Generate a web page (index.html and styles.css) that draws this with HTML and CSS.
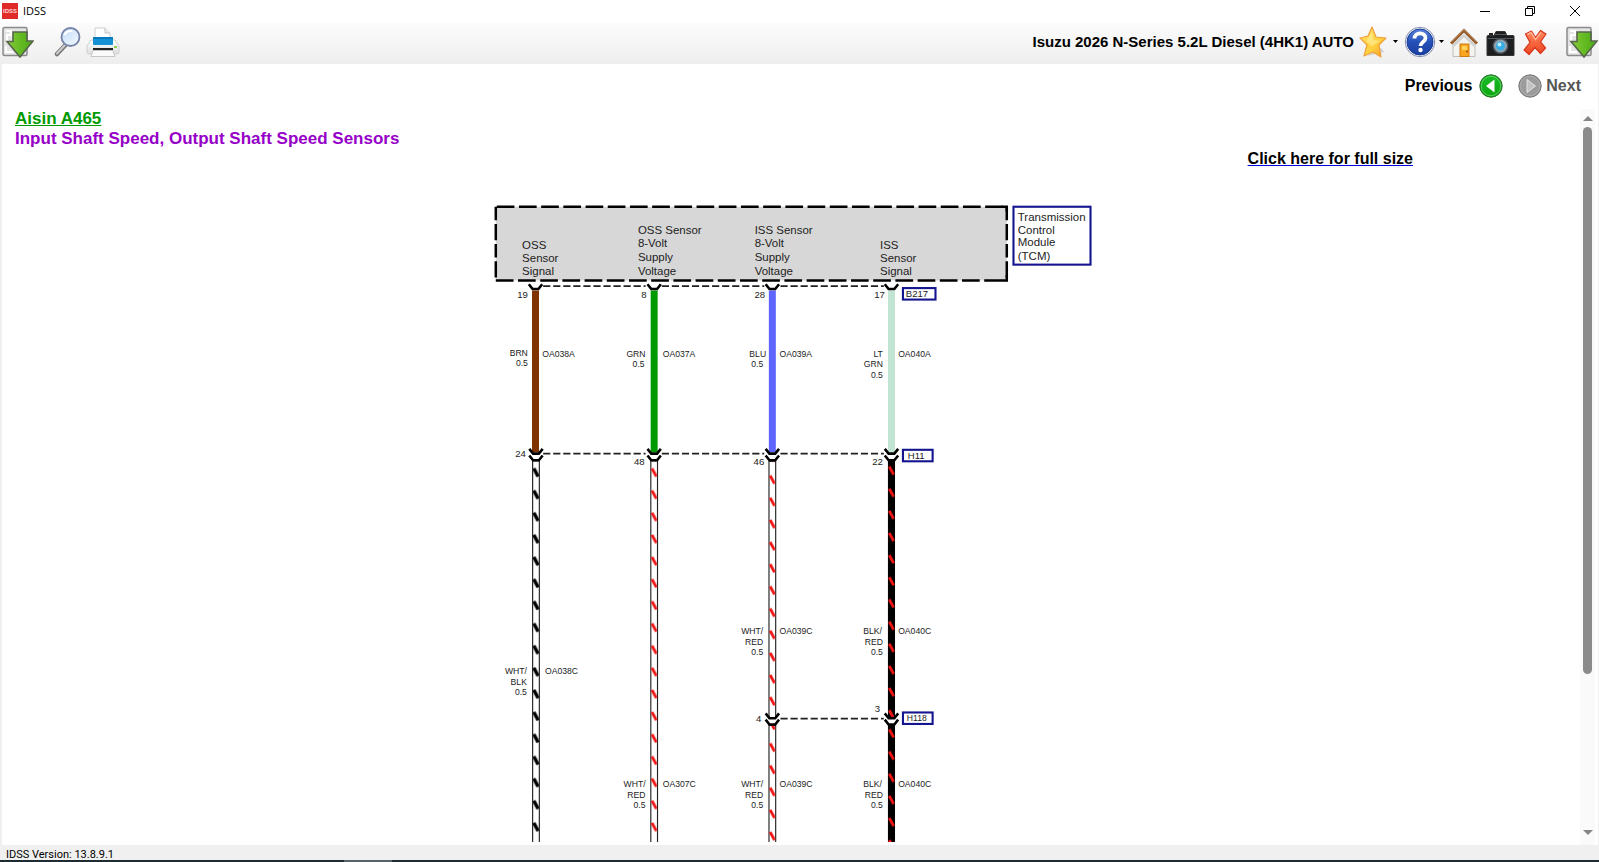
FILE: index.html
```html
<!DOCTYPE html>
<html lang="en">
<head>
<meta charset="utf-8">
<title>IDSS</title>
<link rel="stylesheet" href="styles.css">
</head>
<body>
<div class="window">
  <header class="titlebar">
    <svg class="app-logo" viewBox="0 0 16 16" aria-hidden="true">
      <rect width="16" height="16" fill="#e02a2a"/>
      <text x="8" y="10" text-anchor="middle" class="logo-text">IDSS</text>
    </svg>
    <span class="app-name">IDSS</span>
    <div class="window-controls">
      <button type="button" aria-label="Minimize"><svg viewBox="0 0 10 10"><path d="M0 5.5h10"/></svg></button>
      <button type="button" aria-label="Restore"><svg viewBox="0 0 10 10"><path d="M.5 2.5h7v7h-7zM2.5 2.500v-2h7v7h-2"/></svg></button>
      <button type="button" aria-label="Close"><svg viewBox="0 0 10 10"><path d="M0 0l10 10M10 0L0 10"/></svg></button>
    </div>
  </header>

  <div class="toolbar">
    <div class="tools-left">
      <button type="button" class="tool" aria-label="Collapse left panel">
        <svg width="32" height="32" viewBox="0 0 32 32"><rect x="1" y="1.500" width="24" height="28" rx="1.500" fill="#e4e4e4" stroke="#8a8a8a" stroke-width="1.500"/><path d="M4 5h5v4H5v7M4 20v6h7" fill="none" stroke="#fff" stroke-width="2"/><path d="M11 6h14v9h6L18 31 5 15.500h6z" fill="url(#leaf)" stroke="#56654c" stroke-width="1.600"/></svg>
      </button>
      <button type="button" class="tool search" aria-label="Search">
        <svg width="28" height="32" viewBox="0 0 28 32"><path d="M11.500 19L3 28" stroke="#777" stroke-width="4.500" stroke-linecap="round"/><path d="M11 19L3 27.500" stroke="#ccc" stroke-width="2" stroke-linecap="round"/><circle cx="16.500" cy="11" r="9" fill="url(#lens)" stroke="#7583a8" stroke-width="1.800"/><path d="M10.500 9c1-3 4-4.500 8-4" fill="none" stroke="#fff" stroke-width="2"/></svg>
      </button>
      <button type="button" class="tool" aria-label="Print">
        <svg width="34" height="32" viewBox="0 0 34 32"><path d="M9 2h10l5 5v8H9z" fill="#fff" stroke="#d0d0d0"/><path d="M19 2v5h5" fill="#eee" stroke="#c4c4c4"/><path d="M5 14h24l4 6v6q0 2-2 2H3q-2 0-2-2v-6z" fill="url(#paper)" stroke="#cfcfcf"/><rect x="7" y="11" width="20" height="8" rx="1" fill="#1691d5"/><path d="M7 12h20" stroke="#0873b4" stroke-width="1.500"/><path d="M7 22h20v2.500H7z" fill="#222"/><path d="M7 24.500h20l2 6H5z" fill="#fafafa" stroke="#c6c6c6"/><path d="M28 21h3" stroke="#8fd14c" stroke-width="2"/></svg>
      </button>
    </div>
    <div class="vehicle">Isuzu 2026 N-Series 5.2L Diesel (4HK1) AUTO</div>
    <div class="tools-right">
      <button type="button" class="tool" aria-label="Favorites">
        <svg width="28" height="32" viewBox="0 0 28 32"><path d="M8 30l17-4-3-4z" fill="#cfcfcf"/><path d="M13 1l4 10 10 1-7 7 2 12-8-5-9 4 3-11-7-7 8-2z" fill="url(#gold)" stroke="#eea13d" stroke-width="1.200" stroke-linejoin="round"/><path d="M13 6l1.500 8 7 1-9 5-5-5z" fill="#fff0a0" opacity=".6"/></svg>
      </button>
      <svg class="caret" viewBox="0 0 5 3"><path d="M0 0h5L2.500 3z"/></svg>
      <button type="button" class="tool" aria-label="Help">
        <svg width="32" height="32" viewBox="0 0 32 32"><circle cx="16" cy="16" r="14.700" fill="#fff" stroke="#7d8aa8"/><circle cx="16" cy="16" r="13" fill="url(#blue)" stroke="#163b99"/><path d="M10.500 12.500c0-7 11-6.500 11-.5 0 4-5 4-5 8" fill="none" stroke="#fff" stroke-width="3.800"/><circle cx="16.500" cy="24" r="2.200" fill="#fff"/></svg>
      </button>
      <svg class="caret narrow" viewBox="0 0 5 3"><path d="M0 0h5L2.500 3z"/></svg>
      <button type="button" class="tool" aria-label="Home">
        <svg width="30" height="32" viewBox="0 0 30 32"><path d="M4 16L15 6l11 10v14.500H4z" fill="#f3f3f0" stroke="#bdbdbd"/><path d="M5 17L15 8l10 9v4L15 11 5 21z" fill="#d0d0cd"/><path d="M2 17.500L15 4.500l13 13" fill="none" stroke="#93572d" stroke-width="3"/><path d="M2 16.500L15 3.500l13 13" fill="none" stroke="#c99862" stroke-width="1"/><rect x="11" y="18" width="9" height="12.500" fill="#f9a51d" stroke="#cf7b10"/><rect x="13" y="20" width="5" height="4" fill="#ffd45e"/><circle cx="18" cy="25.500" r="1" fill="#8b4a10"/></svg>
      </button>
      <button type="button" class="tool camera" aria-label="Screenshot">
        <svg width="29" height="32" viewBox="0 0 29 32"><path d="M3 7h4v2H3z" fill="#222"/><path d="M10 5.500h9l2 4h6q1 0 1 1v19H1V10.500q0-1 1-1h6z" fill="#1d1e20" stroke="#333"/><path d="M9 8.500h12M2 12.500h25" stroke="#55595f"/><circle cx="14.500" cy="20" r="8" fill="#4b5056"/><circle cx="14.500" cy="20" r="6.500" fill="#92a4ae"/><circle cx="14.500" cy="20" r="4.500" fill="#36aee5"/><circle cx="13.500" cy="18.500" r="2" fill="#b7edff"/></svg>
      </button>
      <button type="button" class="tool" aria-label="Close page">
        <svg width="24" height="32" viewBox="0 0 24 32"><path d="M2.500 8L8.500 5l4 6.500 5-7 5.500 3.500-5.500 8 5 6-5 5.500-5.500-6-6 7-5-4.500 6-7.500z" fill="url(#red)" stroke="#d73518" stroke-width="1.200" stroke-linejoin="round"/><path d="M4.500 8.500l3.500-2 4.500 7 5.500-7" fill="none" stroke="#ffb193" stroke-width="1.500"/></svg>
      </button>
      <button type="button" class="tool last" aria-label="Collapse right panel">
        <svg width="32" height="32" viewBox="0 0 32 32"><rect x="1" y="1.500" width="24" height="28" rx="1.500" fill="#e4e4e4" stroke="#8a8a8a" stroke-width="1.500"/><path d="M4 5h5v4H5v7M4 20v6h7" fill="none" stroke="#fff" stroke-width="2"/><path d="M11 6h14v9h6L18 31 5 15.500h6z" fill="url(#leaf)" stroke="#56654c" stroke-width="1.600"/></svg>
      </button>
    </div>
    <svg class="defs" width="0" height="0" aria-hidden="true">
      <defs>
        <linearGradient id="leaf"><stop offset="0" stop-color="#8acb3c"/><stop offset=".5" stop-color="#64bb22"/><stop offset="1" stop-color="#4fa818"/></linearGradient>
        <linearGradient id="lens" x2="1" y2="1"><stop offset="0" stop-color="#c3dcf8"/><stop offset="1" stop-color="#f2f9ff"/></linearGradient>
        <linearGradient id="paper" x2="0" y2="1"><stop offset="0" stop-color="#fff"/><stop offset="1" stop-color="#dedede"/></linearGradient>
        <linearGradient id="gold" x2="1" y2="1"><stop offset="0" stop-color="#ffe36c"/><stop offset=".6" stop-color="#ffcf3e"/><stop offset="1" stop-color="#f59524"/></linearGradient>
        <linearGradient id="blue" x2="0" y2="1"><stop offset="0" stop-color="#5b83dd"/><stop offset=".5" stop-color="#2450b8"/><stop offset="1" stop-color="#1c3f9f"/></linearGradient>
        <linearGradient id="red" x2="0" y2="1"><stop offset="0" stop-color="#ff8a5c"/><stop offset="1" stop-color="#ee4424"/></linearGradient>
        <linearGradient id="go" x2="0" y2="1"><stop offset="0" stop-color="#1cbb2a"/><stop offset="1" stop-color="#0aa60f"/></linearGradient>
      </defs>
    </svg>
  </div>

  <main class="page">
    <nav class="pager" aria-label="Pages">
      <button type="button" class="pager-button">Previous
        <svg width="24" height="24" viewBox="0 0 24 24"><circle cx="12" cy="12" r="11.200" fill="url(#go)" stroke="#2f6d2f"/><circle cx="12" cy="12" r="9.700" fill="none" stroke="#6bd86b" stroke-width=".8"/><path d="M15.500 5.500v13L7 12z" fill="#fff"/></svg>
      </button>
      <button type="button" class="pager-button next">
        <svg width="24" height="24" viewBox="0 0 24 24"><circle cx="12" cy="12" r="11.200" fill="#9b9b9b" stroke="#777"/><circle cx="12" cy="12" r="9.700" fill="none" stroke="#adadad"/><path d="M9 5.500v13l8.500-6.500z" fill="#c2c2c2" stroke="#e2e2e2"/></svg>
        Next</button>
    </nav>
    <div class="viewport">
      <article class="document">
        <h1 class="heading"><a href="#a465">Aisin A465</a></h1>
        <h2 class="heading subject">Input Shaft Speed, Output Shaft Speed Sensors</h2>
        <p class="full-size"><a href="#full">Click here for full size</a></p>
        <svg class="diagram" viewBox="0 0 650 681" role="img" aria-label="Speed sensor wiring diagram">
          <defs>
            <path id="cup" d="M-7-5l4 5h6l4-5"/>
            <pattern id="stripe-black" width="7" height="23.150" x="-3.500" patternUnits="userSpaceOnUse"><path d="M1.200 7L5.800 15.500" stroke="#000" stroke-width="3.600"/></pattern>
            <pattern id="stripe-red" width="7" height="23.150" x="-3.500" patternUnits="userSpaceOnUse"><path d="M1.200 7L5.800 15.500" stroke="#f01414" stroke-width="3"/></pattern>
          </defs>

          <rect x="16.500" y="17.500" width="534" height="77" fill="#d7d7d7"/>
          <g class="module-edge">
            <path d="M16.500 17.500H550.500" stroke-dashoffset="-1"/>
            <path d="M16.500 94.500H550.500"/>
            <path d="M16.500 17.500V94.500M550.500 17.500V94.500" stroke-dasharray="14 4 17 4"/>
            <path d="M545 17.500h5.500v5M550.500 89v5.500H545" stroke-dasharray="none"/>
          </g>
          <g class="label-box">
            <rect x="557.500" y="17.500" width="80.500" height="60.500"/>
            <rect x="442" y="102.500" width="34" height="12"/>
            <rect x="442" y="271.500" width="31" height="12"/>
            <rect x="442" y="546" width="31" height="12"/>
          </g>

          <g class="link-line">
            <path d="M66 100.500H173M190 100.500H297M314 100.500H422"/>
            <path d="M66 275.500H173M190 275.500H297M314 275.500H422"/>
            <path d="M314 552.500H422"/>
          </g>

          <g stroke-width="7.300">
            <path d="M58 105V274" stroke="#803300"/>
            <path d="M182 105V274" stroke="#009900"/>
            <path d="M305.500 105V274" stroke="#5f66ff"/>
            <path d="M430 105V274" stroke="#c2e5d3"/>
          </g>

          <g transform="translate(58.500 284)"><rect class="wire-white" x="-3.500" y="-1" width="7" height="400"/><rect x="-3.500" y="-1" width="7" height="398" fill="url(#stripe-black)"/></g>
          <g transform="translate(182 284)"><rect class="wire-white" x="-3.500" y="-1" width="7" height="400"/><rect x="-3.500" y="-1" width="7" height="398" fill="url(#stripe-red)"/></g>
          <g transform="translate(305.500 291.500)"><rect class="wire-white" x="-3.500" y="-8" width="7" height="268"/><rect x="-3.500" y="-8" width="7" height="268" fill="url(#stripe-red)"/></g>
          <g transform="translate(305.500 594.500)"><rect class="wire-white" x="-3.500" y="-35" width="7" height="124"/><rect x="-3.500" y="-35" width="7" height="124" fill="url(#stripe-red)"/></g>
          <g transform="translate(430 282)"><rect x="-3.700" y="1" width="7.400" height="268"/><rect x="-3.500" y="1" width="7" height="268" fill="url(#stripe-red)"/></g>
          <g transform="translate(430 603)"><rect x="-3.700" y="-44" width="7.400" height="124"/><rect x="-3.500" y="-44" width="7" height="124" fill="url(#stripe-red)"/></g>

          <g class="cups">
            <use href="#cup" x="58" y="103.500"/><use href="#cup" x="182" y="103.500"/><use href="#cup" x="305.500" y="103.500"/><use href="#cup" x="430" y="103.500"/>
            <path class="gap" d="M51 278.500h15M175 278.500h15M299 278.500h15M423 278.500h15M299 555.500h15M423 555.500h15"/>
            <use href="#cup" x="58.500" y="275.500"/><use href="#cup" x="182" y="275.500"/><use href="#cup" x="305.500" y="275.500"/><use href="#cup" x="430" y="275.500"/>
            <use href="#cup" x="58.500" y="282.500"/><use href="#cup" x="182" y="282.500"/><use href="#cup" x="305.500" y="282.500"/><use href="#cup" x="430" y="282.500"/>
            <use href="#cup" x="305.500" y="552"/><use href="#cup" x="430" y="552"/><use href="#cup" x="305.500" y="558.500"/><use href="#cup" x="430" y="558.500"/>
          </g>

          <g class="name">
            <text x="44" y="62">OSS</text><text x="44" y="75">Sensor</text><text x="44" y="89">Signal</text>
            <text x="165" y="46">OSS Sensor</text><text x="165" y="60">8-Volt</text><text x="165" y="74">Supply</text><text x="165" y="89">Voltage</text>
            <text x="287" y="46">ISS Sensor</text><text x="287" y="60">8-Volt</text><text x="287" y="74">Supply</text><text x="287" y="89">Voltage</text>
            <text x="418" y="62">ISS</text><text x="418" y="75">Sensor</text><text x="418" y="89">Signal</text>
            <text x="562" y="32">Transmission</text><text x="562" y="46">Control</text><text x="562" y="59">Module</text><text x="562" y="73">(TCM)</text>
          </g>

          <g class="pin">
            <text x="50" y="113">19</text><text x="174" y="113">8</text><text x="298" y="113">28</text><text x="423" y="113">17</text>
            <text x="48" y="279">24</text><text x="172" y="287">48</text><text x="297" y="287">46</text><text x="421" y="287">22</text>
            <text x="294" y="556">4</text><text x="418" y="546">3</text>
          </g>
          <g class="connector">
            <text x="445" y="112">B217</text><text x="447" y="281">H11</text><text x="446" y="555" class="small">H118</text>
          </g>

          <g class="color">
            <text x="50" y="173">BRN</text><text x="50" y="184">0.5</text>
            <text x="173" y="174">GRN</text><text x="172" y="185">0.5</text>
            <text x="299" y="174">BLU</text><text x="296" y="185">0.5</text>
            <text x="421" y="174">LT</text><text x="421" y="185">GRN</text><text x="421" y="196">0.5</text>
            <text x="49" y="506">WHT/</text><text x="49" y="517">BLK</text><text x="49" y="528">0.5</text>
            <text x="296" y="464">WHT/</text><text x="296" y="475">RED</text><text x="296" y="486">0.5</text>
            <text x="420" y="464">BLK/</text><text x="421" y="475">RED</text><text x="421" y="486">0.5</text>
            <text x="173" y="624">WHT/</text><text x="173" y="635">RED</text><text x="173" y="646">0.5</text>
            <text x="296" y="624">WHT/</text><text x="296" y="635">RED</text><text x="296" y="646">0.5</text>
            <text x="420" y="624">BLK/</text><text x="421" y="635">RED</text><text x="421" y="646">0.5</text>
          </g>
          <g class="circuit">
            <text x="65" y="174">OA038A</text><text x="191" y="174">OA037A</text><text x="313" y="174">OA039A</text><text x="437" y="174">OA040A</text>
            <text x="68" y="506">OA038C</text><text x="313" y="464">OA039C</text><text x="437" y="464">OA040C</text>
            <text x="191" y="624">OA307C</text><text x="313" y="624">OA039C</text><text x="437" y="624">OA040C</text>
          </g>
        </svg>
      </article>
      <div class="scrollbar">
        <button type="button" aria-label="Scroll up"><svg width="10" height="5" viewBox="0 0 10 5"><path d="M0 5l5-5 5 5z"/></svg></button>
        <div class="track"><div class="thumb"></div></div>
        <button type="button" class="down" aria-label="Scroll down"><svg width="10" height="5" viewBox="0 0 10 5"><path d="M0 0l5 5 5-5z"/></svg></button>
      </div>
    </div>
  </main>

  <footer class="status">IDSS Version: 13.8.9.1</footer>
  <div class="taskbar"><div class="taskbar-item"></div></div>
</div>
</body>
</html>
```
FILE: styles.css
```css
* { box-sizing: border-box; }

body {
  margin: 0;
  font-family: "Liberation Sans", Arial, sans-serif;
  color: #000;
  background: #fff;
}

button {
  padding: 0;
  border: 0;
  background: none;
  color: inherit;
  font: inherit;
  display: flex;
  align-items: center;
}

.window {
  height: 100vh;
  display: flex;
  flex-direction: column;
  overflow: hidden;
}

.titlebar {
  flex: none;
  height: 23px;
  padding: 0 9px 2px 2px;
  display: flex;
  align-items: center;
  gap: 5px;
}
.app-logo { width: 16px; height: 16px; }
.logo-text { font-size: 6px; font-weight: bold; fill: #ffd9d9; }
.app-name { font-family: "Open Sans", sans-serif; font-size: 11px; }
.window-controls { margin-left: auto; display: flex; }
.window-controls button { width: 45px; height: 20px; padding-left: 15px; }
.window-controls button:last-child { width: 35px; }
.window-controls svg {
  width: 10px;
  height: 10px;
  fill: none;
  stroke: #000;
  overflow: visible;
}

.toolbar {
  flex: none;
  height: 41px;
  padding: 0 1px 4px 2px;
  display: flex;
  align-items: center;
  background: linear-gradient(#fcfcfc, #eeeeee);
}
.tools-left, .tools-right { display: flex; align-items: center; }
.tool svg { display: block; }
.search { margin: 0 4px 0 20px; }
.vehicle { margin-left: auto; font-size: 15px; font-weight: bold; }
.tools-right { margin-left: 5px; }
.caret { width: 5px; height: 3px; margin: 0 6px; }
.caret.narrow { margin: 0 5px 0 3px; }
.camera { margin: 0 8px 0 7px; }
.last { margin-left: 19px; }
.defs { position: absolute; }

.page {
  flex: 1;
  min-height: 0;
  display: flex;
  flex-direction: column;
  border-left: 2px solid #f0f0f0;
  border-right: 1px solid #f0f0f0;
}
.pager {
  flex: none;
  height: 45px;
  padding: 0 17px 2px 0;
  display: flex;
  align-items: center;
  justify-content: flex-end;
  gap: 15px;
  font-size: 16px;
  font-weight: bold;
}
.pager-button { gap: 7px; }
.pager-button.next { gap: 4px; color: #555; }

.viewport { flex: 1; min-height: 0; display: flex; }
.document {
  flex: 1;
  overflow: hidden;
  display: flex;
  flex-direction: column;
}
.heading {
  margin: 0;
  padding-left: 13px;
  font-size: 17px;
  line-height: 20px;
}
.heading a { color: #009a00; }
.subject { color: #9600c8; }
.full-size {
  margin: 0;
  padding-right: 167px;
  text-align: right;
  font-size: 16px;
  font-weight: bold;
  line-height: 20px;
}
.full-size a { color: #000; text-decoration-color: #0000e0; }

.diagram {
  flex: none;
  align-self: center;
  width: 622px;
  margin-top: 21px;
}
.module-edge { fill: none; stroke: #000; stroke-width: 2.6; stroke-dasharray: 18.500 4.700; }
.label-box { fill: #fff; stroke: #15158f; stroke-width: 2.200; }
.link-line { stroke: #222; stroke-width: 1.900; stroke-dasharray: 7.500 3; }
.wire-white { fill: #fff; stroke: #222; stroke-width: 1.200; }
.cups { fill: none; stroke: #000; stroke-width: 2.700; }
.cups .gap { stroke: #fff; stroke-width: 3; }
.diagram text { fill: #222; }
.name { font-size: 12px; }
.pin { font-size: 10px; text-anchor: end; }
.connector { font-size: 10px; }
.connector .small, .color, .circuit { font-size: 9px; }
.color { text-anchor: end; }

.scrollbar {
  flex: none;
  width: 15px;
  margin-right: 3px;
  display: flex;
  flex-direction: column;
  align-items: center;
  background: #fafafa;
}
.scrollbar button { width: 15px; height: 18px; justify-content: center; }
.scrollbar .down { height: 25px; }
.scrollbar svg { fill: #858585; }
.track { flex: 1; width: 9px; }
.thumb { height: 79%; border-radius: 5px; background: #8b8b8b; }

.status {
  flex: none;
  height: 15px;
  padding: 2px 6px 0;
  background: #f0f0f0;
  font-family: Roboto, sans-serif;
  font-size: 11px;
  line-height: 15px;
}
.taskbar { flex: none; height: 2px; padding-left: 344px; background: #1d2b33; }
.taskbar-item { width: 48px; height: 2px; background: #56636a; }
```
